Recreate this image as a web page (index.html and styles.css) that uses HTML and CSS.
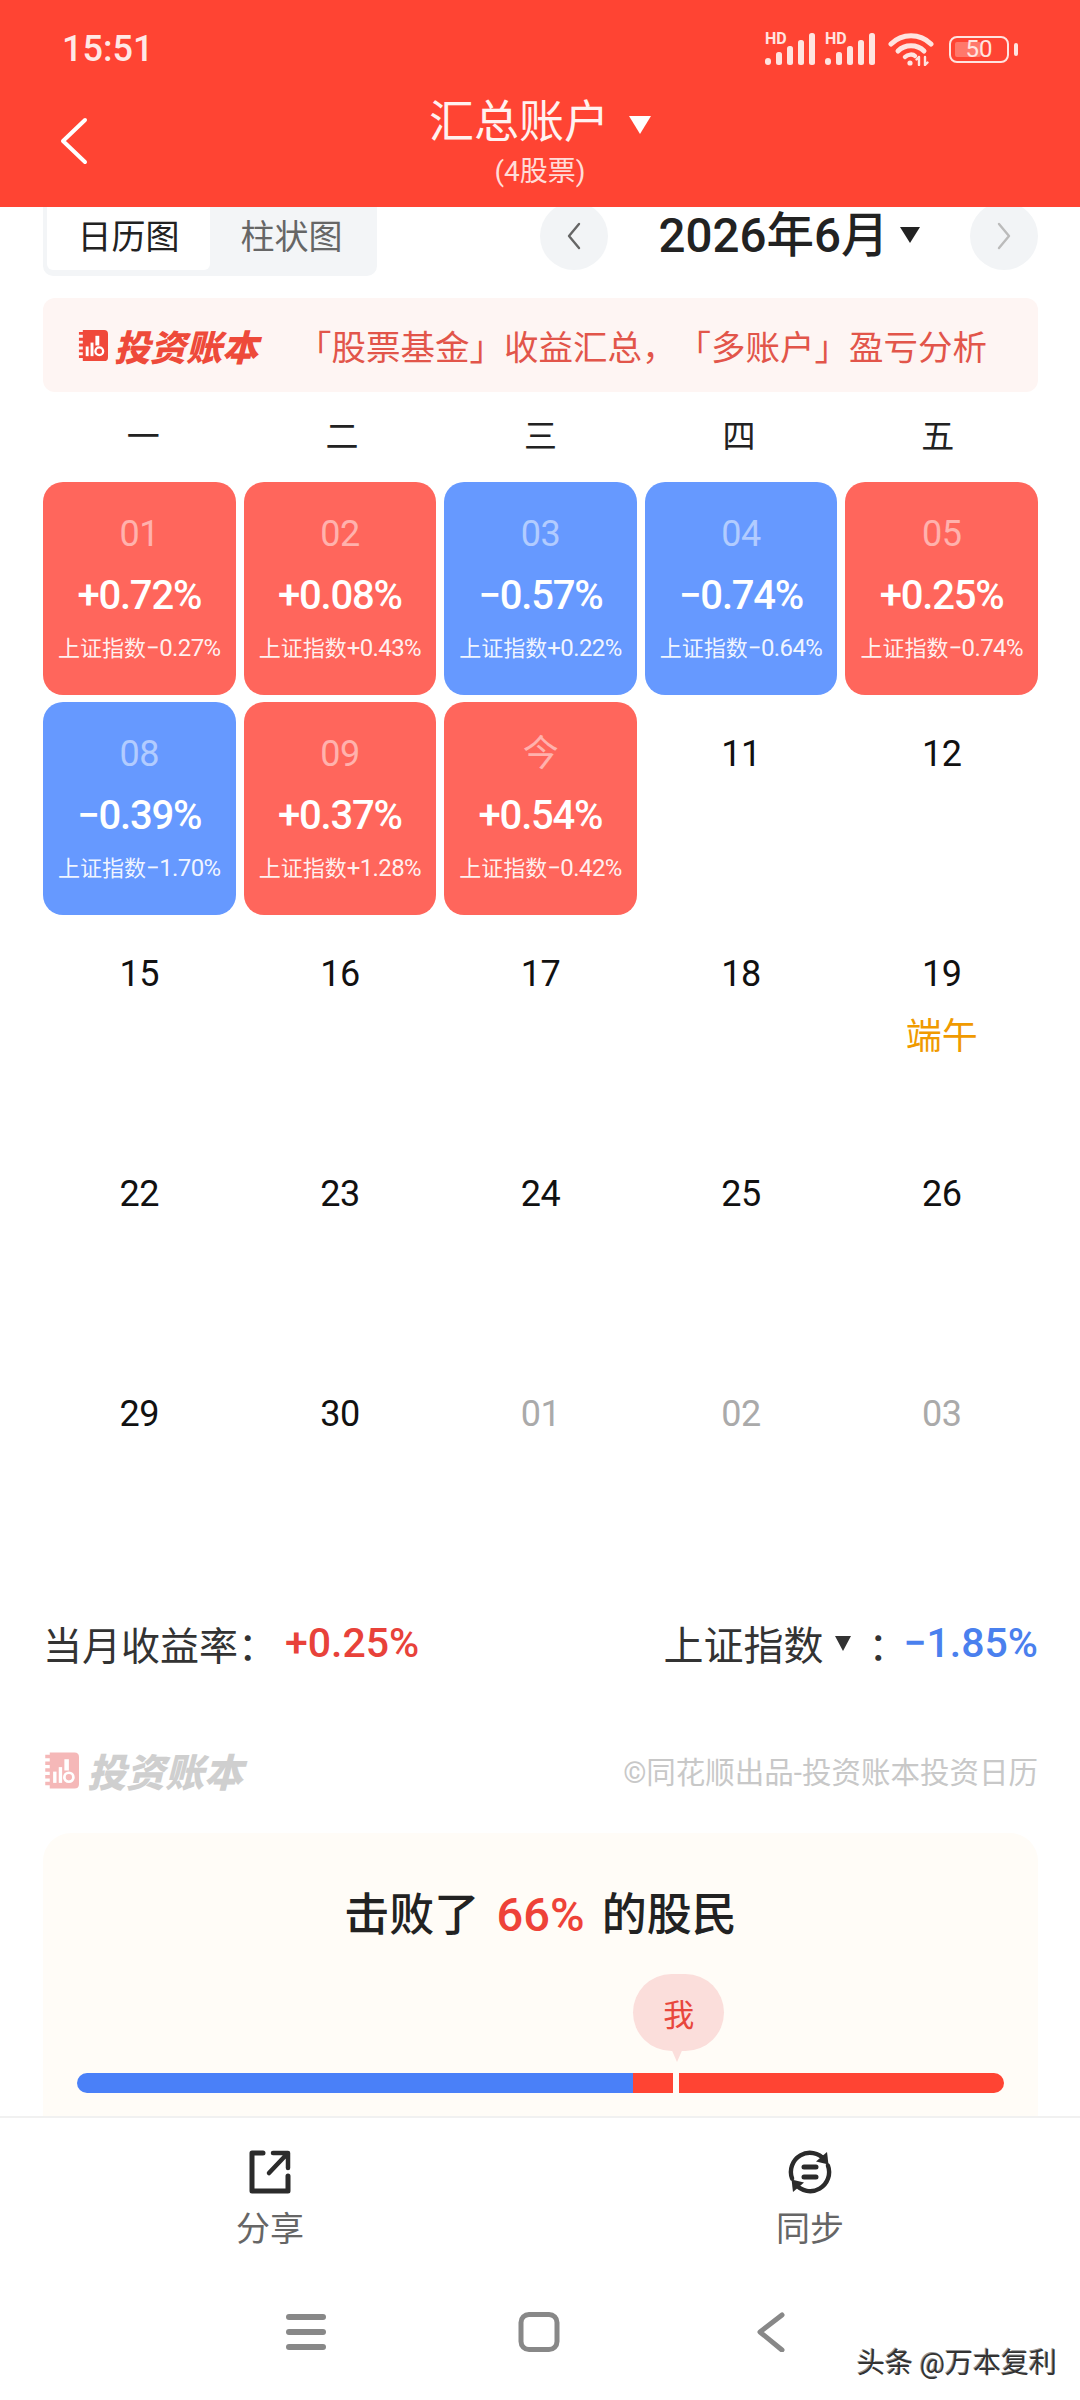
FILE: index.html

```html
<!DOCTYPE html>
<html>
<head>
<meta charset="UTF-8">
<title>投资日历</title>
<link rel="stylesheet" href="styles.css">
</head>
<body>
<svg class="defs" width="0" height="0">
  <symbol id="logo-mark" viewBox="0 0 32 32">
    <path d="M6 0H28Q32 0 32 4V28Q32 32 28 32H6V29H2V26H6V23H2V20H6V17H2V14H6V11H2V8H6V5H2V2H6Z" fill="currentColor"/>
    <rect x="9" y="17" width="3" height="10" fill="#fff"/>
    <rect x="14" y="13" width="3" height="14" fill="#fff"/>
    <rect x="19" y="6" width="4" height="10" fill="#fff"/>
    <circle cx="23" cy="22" r="4" fill="none" stroke="#fff" stroke-width="2.4"/>
  </symbol>
  <symbol id="signal" viewBox="0 0 50 32">
    <rect x="0" y="25" width="6" height="7" rx="3" fill="currentColor"/>
    <rect x="11" y="19" width="6" height="13" rx="2.5" fill="currentColor"/>
    <rect x="22" y="13" width="6" height="19" rx="2.5" fill="currentColor"/>
    <rect x="33" y="7" width="6" height="25" rx="2.5" fill="currentColor"/>
    <rect x="44" y="0" width="6" height="32" rx="2.5" fill="currentColor"/>
  </symbol>
</svg>

<div class="page">
  <header class="topbar">
    <div class="status">
      <span class="status-time">15:51</span>
      <div class="status-icons">
        <div class="signal"><span class="signal-hd">HD</span><svg class="ic-signal" viewBox="0 0 50 32"><use href="#signal"/></svg></div>
        <div class="signal"><span class="signal-hd">HD</span><svg class="ic-signal" viewBox="0 0 50 32"><use href="#signal"/></svg></div>
        <svg class="ic-wifi" viewBox="0 0 46 34" fill="none" stroke="currentColor" stroke-linecap="round">
          <path d="M3 12C14 1 32 1 43 12" stroke-width="5"/>
          <path d="M10 19C17 12 29 12 36 19" stroke-width="5"/>
          <path d="M17 25C20 22 25 22 27 24" stroke-width="4.5"/>
          <circle cx="22" cy="31" r="2.6" fill="currentColor" stroke="none"/>
          <path d="M31 33V25M28.5 27.5L31 25M37 25V33M37 33L39.5 30.5" stroke-width="2.4"/>
        </svg>
        <div class="battery"><span class="battery-fill"></span><span class="battery-num">50</span></div>
        <span class="battery-nub"></span>
      </div>
    </div>
    <div class="titlebar">
      <svg class="ic-back" viewBox="0 0 28 48" fill="none" stroke="#fff" stroke-width="4" stroke-linecap="round" stroke-linejoin="round"><path d="M25 3L3 24L25 45"/></svg>
      <div class="title-block">
        <div class="title">汇总账户<i class="tri tri-title"></i></div>
        <div class="subtitle">(4股票)</div>
      </div>
    </div>
  </header>

  <main class="content">
    <div class="toolbar">
      <div class="tabs">
        <span class="tab tab-on">日历图</span>
        <span class="tab">柱状图</span>
      </div>
      <div class="month-nav">
        <span class="round-btn"><svg viewBox="0 0 16 30" fill="none" stroke="#666" stroke-width="2.4" stroke-linecap="round" stroke-linejoin="round"><path d="M13 3L3 15L13 27"/></svg></span>
        <span class="month">2026年6月<i class="tri tri-month"></i></span>
        <span class="round-btn"><svg viewBox="0 0 16 30" fill="none" stroke="#bbb" stroke-width="2.4" stroke-linecap="round" stroke-linejoin="round"><path d="M3 3L13 15L3 27"/></svg></span>
      </div>
    </div>

    <div class="banner">
      <svg class="logo-mark"><use href="#logo-mark"/></svg>
      <span class="logo-text">投资账本</span>
      <span class="banner-text">「股票基金」收益汇总，「多账户」盈亏分析</span>
    </div>

    <div class="weekdays">
      <span>一</span><span>二</span><span>三</span><span>四</span><span>五</span>
    </div>

    <div class="calendar">
      <div class="cell up"><div class="cell-date">01</div><div class="cell-val">+0.72%</div><div class="cell-idx"><span>上证指数</span>−0.27%</div></div>
      <div class="cell up"><div class="cell-date">02</div><div class="cell-val">+0.08%</div><div class="cell-idx"><span>上证指数</span>+0.43%</div></div>
      <div class="cell down"><div class="cell-date">03</div><div class="cell-val">−0.57%</div><div class="cell-idx"><span>上证指数</span>+0.22%</div></div>
      <div class="cell down"><div class="cell-date">04</div><div class="cell-val">−0.74%</div><div class="cell-idx"><span>上证指数</span>−0.64%</div></div>
      <div class="cell up"><div class="cell-date">05</div><div class="cell-val">+0.25%</div><div class="cell-idx"><span>上证指数</span>−0.74%</div></div>

      <div class="cell down"><div class="cell-date">08</div><div class="cell-val">−0.39%</div><div class="cell-idx"><span>上证指数</span>−1.70%</div></div>
      <div class="cell up"><div class="cell-date">09</div><div class="cell-val">+0.37%</div><div class="cell-idx"><span>上证指数</span>+1.28%</div></div>
      <div class="cell up"><div class="cell-date cell-today">今</div><div class="cell-val">+0.54%</div><div class="cell-idx"><span>上证指数</span>−0.42%</div></div>
      <div class="cell"><div class="cell-date">11</div></div>
      <div class="cell"><div class="cell-date">12</div></div>

      <div class="cell"><div class="cell-date">15</div></div>
      <div class="cell"><div class="cell-date">16</div></div>
      <div class="cell"><div class="cell-date">17</div></div>
      <div class="cell"><div class="cell-date">18</div></div>
      <div class="cell"><div class="cell-date">19</div><div class="cell-note">端午</div></div>

      <div class="cell"><div class="cell-date">22</div></div>
      <div class="cell"><div class="cell-date">23</div></div>
      <div class="cell"><div class="cell-date">24</div></div>
      <div class="cell"><div class="cell-date">25</div></div>
      <div class="cell"><div class="cell-date">26</div></div>

      <div class="cell"><div class="cell-date">29</div></div>
      <div class="cell"><div class="cell-date">30</div></div>
      <div class="cell other"><div class="cell-date">01</div></div>
      <div class="cell other"><div class="cell-date">02</div></div>
      <div class="cell other"><div class="cell-date">03</div></div>
    </div>

    <div class="summary">
      <div class="summary-side">当月收益率：<b class="num-up">+0.25%</b></div>
      <div class="summary-side"><span class="summary-index">上证指数</span><i class="tri tri-index"></i><span class="summary-colon">：</span><b class="num-down">−1.85%</b></div>
    </div>

    <div class="credit">
      <div class="credit-logo">
        <svg class="logo-mark logo-mark-pale"><use href="#logo-mark"/></svg>
        <span class="logo-text logo-text-pale">投资账本</span>
      </div>
      <span class="credit-text">©同花顺出品-投资账本投资日历</span>
    </div>

    <section class="rank">
      <h2 class="rank-title">击败了 <span class="rank-pct">66%</span> 的股民</h2>
      <div class="rank-mark"><span class="bubble">我</span></div>
      <div class="rank-bar">
        <span class="seg-blue"></span>
        <span class="seg-red seg-short"></span>
        <span class="seg-red seg-long"></span>
      </div>
    </section>
  </main>

  <footer class="bottom">
    <div class="actions">
      <div class="action">
        <svg class="action-ic" viewBox="0 0 46 46" fill="none" stroke="#2b2b2b" stroke-width="5" stroke-linejoin="round" stroke-linecap="round">
          <path d="M16 4H5V42H41V27"/>
          <path d="M22 24L40 5M26 4H41V19" stroke-width="4.5"/>
        </svg>
        <span>分享</span>
      </div>
      <div class="action">
        <svg class="action-ic" viewBox="0 0 46 46" fill="none" stroke="#2b2b2b" stroke-width="4.4" stroke-linecap="round">
          <path d="M5.1 29.5A19 19 0 0 1 37.6 10.8"/>
          <path d="M40.9 16.5A19 19 0 0 1 8.4 35.2"/>
          <path d="M40 3L41.5 15.5L29 12.5Z" fill="#2b2b2b" stroke="none"/>
          <path d="M6 43L4.5 30.5L17 33.5Z" fill="#2b2b2b" stroke="none"/>
          <path d="M17 18H29M17 28H29" stroke-width="5"/>
        </svg>
        <span>同步</span>
      </div>
    </div>
    <nav class="sysnav">
      <svg class="nav-ic" viewBox="0 0 44 40" fill="#888"><rect x="2" y="2" width="40" height="6" rx="3"/><rect x="2" y="17" width="40" height="6" rx="3"/><rect x="2" y="32" width="40" height="6" rx="3"/></svg>
      <svg class="nav-ic" viewBox="0 0 44 40" fill="none" stroke="#888" stroke-width="5"><rect x="4" y="2.5" width="36" height="35" rx="8"/></svg>
      <svg class="nav-ic" viewBox="0 0 44 40" fill="none" stroke="#888" stroke-width="5" stroke-linecap="round" stroke-linejoin="round"><path d="M32 3L10 20L32 38"/></svg>
    </nav>
    <span class="watermark">头条 @万本复利</span>
  </footer>
</div>
</body>
</html>
```

FILE: styles.css

```css
* {
  box-sizing: border-box;
}
html, body {
  margin: 0;
  height: 2400px;
  overflow: hidden;
}
body {
  font-family: Roboto, "Noto Sans CJK SC", sans-serif;
  background: #fff;
  color: #222;
  text-spacing-trim: space-all;
}
.defs {
  position: absolute;
}
.page {
  width: 1080px;
  height: 2400px;
  display: flex;
  flex-direction: column;
}

/* header */
.topbar {
  height: 207px;
  flex: none;
  background: #ff4433;
  color: #fff;
}
.status {
  height: 90px;
  padding: 20px 62px 12px;
  display: flex;
  align-items: center;
  justify-content: space-between;
}
.status-time {
  font-size: 36px;
  font-weight: 500;
  color: #ffe9e6;
}
.status-icons {
  display: flex;
  align-items: center;
  color: #ffe4e0;
}
.signal {
  width: 50px;
  height: 32px;
  margin-right: 10px;
  position: relative;
}
.signal-hd {
  position: absolute;
  left: 0;
  top: -2px;
  font-size: 16px;
  font-weight: 700;
  line-height: 16px;
}
.ic-signal {
  display: block;
  width: 50px;
  height: 32px;
}
.ic-wifi {
  width: 46px;
  height: 34px;
  margin: 0 15px 0 3px;
}
.battery {
  width: 60px;
  height: 27px;
  border: 2.5px solid currentColor;
  border-radius: 8px;
  position: relative;
  display: flex;
  align-items: center;
  justify-content: center;
  font-size: 24px;
  line-height: 1;
}
.battery-fill {
  position: absolute;
  left: 4px;
  top: 4px;
  bottom: 4px;
  width: 26px;
  border-radius: 2px;
  background: rgba(255, 255, 255, 0.28);
}
.battery-num {
  position: relative;
}
.battery-nub {
  width: 4px;
  height: 13px;
  margin-left: 5px;
  border-radius: 2px;
  background: currentColor;
}
.titlebar {
  padding-top: 3px;
  position: relative;
  display: flex;
  justify-content: center;
}
.ic-back {
  position: absolute;
  left: 60px;
  top: 27px;
  width: 28px;
  height: 48px;
}
.title-block {
  text-align: center;
}
.title {
  font-size: 45px;
  line-height: 60px;
  color: #fff2f0;
}
.subtitle {
  font-size: 28px;
  line-height: 34px;
  margin-top: 2px;
  color: #ffdcd8;
}
.tri {
  display: inline-block;
  width: 0;
  height: 0;
  border-style: solid;
  border-color: currentColor transparent transparent;
}
.tri-title {
  border-width: 18px 11px 0;
  margin-left: 20px;
  vertical-align: 4px;
  color: #fff;
}

/* main column */
.content {
  flex: 1;
  min-height: 0;
  overflow: hidden;
  padding: 0 42px 0 43px;
}
.toolbar {
  height: 74px;
  margin-top: -5px;
  display: flex;
  justify-content: space-between;
}
.tabs {
  width: 334px;
  padding: 0 4px 6px;
  display: flex;
  background: #f3f5f7;
  border-radius: 0 0 10px 10px;
}
.tab {
  width: 163px;
  font-size: 34px;
  padding-top: 8px;
  text-align: center;
  color: #666;
}
.tab-on {
  color: #222;
  background: #fff;
  border-radius: 0 0 6px 6px;
}
.month-nav {
  width: 498px;
  height: 68px;
  display: flex;
  align-items: center;
  justify-content: space-between;
}
.round-btn {
  width: 68px;
  height: 68px;
  border-radius: 50%;
  background: #f2f4f6;
  display: flex;
  align-items: center;
  justify-content: center;
}
.round-btn svg {
  width: 16px;
  height: 30px;
}
.month {
  font-size: 47.5px;
  font-weight: 500;
  line-height: 68px;
  color: #222;
}
.tri-month {
  border-width: 16px 10.5px 0;
  margin-left: 11px;
  vertical-align: 9px;
}

.banner {
  height: 94px;
  margin-top: 22px;
  padding-left: 34px;
  display: flex;
  align-items: center;
  background: #fef5f3;
  border-radius: 12px;
}
.logo-mark {
  width: 31px;
  height: 31px;
  color: #f0493a;
}
.logo-text {
  margin-left: 6px;
  font-size: 36px;
  font-weight: 900;
  font-style: italic;
  color: #ee4a3a;
  font-family: "Noto Sans CJK SC", sans-serif;
}
.banner-text {
  margin-left: 39px;
  font-size: 34.5px;
  color: #e2554a;
  white-space: nowrap;
}

.weekdays {
  margin-top: 20px;
  padding: 0 5px;
  display: grid;
  grid-template-columns: repeat(5, 1fr);
  column-gap: 8px;
  font-size: 33px;
  line-height: 50px;
  text-align: center;
}

.calendar {
  margin-top: 20px;
  display: grid;
  grid-template-columns: repeat(5, 1fr);
  grid-auto-rows: 213px;
  gap: 7px 8px;
}
.cell {
  padding-top: 30px;
  border-radius: 20px;
  text-align: center;
}
.cell.up {
  background: #ff665c;
  color: #fff;
}
.cell.down {
  background: #6699ff;
  color: #fff;
}
.cell-date {
  font-size: 36px;
  line-height: 44px;
  letter-spacing: -0.5px;
  color: #111;
}
.up .cell-date, .down .cell-date {
  color: rgba(255, 255, 255, 0.5);
}
.other .cell-date {
  color: #aaa;
}
.cell-val {
  margin-top: 15px;
  font-size: 40px;
  font-weight: 500;
  line-height: 50px;
  letter-spacing: -1.2px;
}
.cell-idx {
  margin-top: 12px;
  font-size: 24px;
  line-height: 30px;
  color: rgba(255, 255, 255, 0.92);
  white-space: nowrap;
  letter-spacing: -0.6px;
}
.cell-idx span {
  font-size: 22px;
  letter-spacing: 0;
}
.cell-note {
  margin-top: 16px;
  font-size: 36px;
  line-height: 50px;
  color: #f09a00;
}

.summary {
  margin-top: 40px;
  height: 56px;
  display: flex;
  justify-content: space-between;
  align-items: center;
  font-size: 39px;
  color: #333;
}
.summary-side {
  display: flex;
  align-items: center;
}
.summary-side b {
  font-size: 41px;
  font-weight: 500;
}
.summary-index {
  font-size: 40px;
}
.summary-colon {
  margin-right: -4px;
}
.num-up {
  margin-left: 8px;
  color: #e8423a;
}
.num-down {
  color: #4a80ee;
}
.tri-index {
  border-width: 15px 8.5px 0;
  margin: 0 17px 0 12px;
  color: #333;
}

.credit {
  margin-top: 79px;
  height: 40px;
  display: flex;
  align-items: center;
  justify-content: space-between;
}
.credit-logo {
  display: flex;
  align-items: center;
}
.logo-mark-pale {
  width: 36px;
  height: 37px;
  color: #f5b8b8;
}
.logo-text-pale {
  margin-left: 8px;
  font-size: 39px;
  color: #cfcfcf;
}
.credit-text {
  font-size: 29.5px;
  color: #c8c8c8;
  white-space: nowrap;
}

.rank {
  margin-top: 43px;
  height: 330px;
  padding: 52px 34px 0;
  background: #fffcf7;
  border-radius: 28px;
}
.rank-title {
  margin: 0;
  font-size: 45px;
  font-weight: 500;
  line-height: 60px;
  text-align: center;
  word-spacing: 6px;
  color: #222;
}
.rank-pct {
  font-size: 47px;
  color: #ee4238;
}
.rank-mark {
  margin-top: 28px;
  height: 99px;
  padding-left: 60%;
}
.bubble {
  width: 91px;
  height: 77px;
  border-radius: 40px;
  background: #fbdedb;
  color: #e8473c;
  font-size: 31px;
  display: flex;
  align-items: center;
  justify-content: center;
  position: relative;
}
.bubble::after {
  content: "";
  position: absolute;
  left: 37px;
  top: 72px;
  border-style: solid;
  border-width: 16px 7px 0;
  border-color: #fbdedb transparent transparent;
}
.rank-bar {
  height: 20px;
  display: flex;
}
.rank-bar span {
  display: block;
}
.seg-blue {
  width: 60%;
  background: #4a80f8;
  border-radius: 10px 0 0 10px;
}
.seg-red {
  background: #ff4433;
}
.seg-short {
  width: 40px;
}
.seg-long {
  flex: 1;
  margin-left: 6px;
  border-radius: 0 10px 10px 0;
}

/* bottom */
.bottom {
  height: 284px;
  flex: none;
  background: #fff;
  border-top: 2px solid #f1f1f1;
  position: relative;
}
.actions {
  height: 152px;
  padding-top: 31px;
  display: grid;
  grid-template-columns: 1fr 1fr;
}
.action {
  display: flex;
  flex-direction: column;
  align-items: center;
  font-size: 34px;
  line-height: 44px;
  color: #666;
}
.action-ic {
  width: 46px;
  height: 46px;
  margin-bottom: 12px;
}
.sysnav {
  padding: 42px 2px 0 0;
  display: flex;
  justify-content: center;
  gap: 189px;
}
.nav-ic {
  width: 44px;
  height: 40px;
}
.watermark {
  position: absolute;
  right: 23px;
  top: 228px;
  font-size: 28px;
  line-height: 36px;
  color: #333;
  text-shadow: 1px 1px 0 #fff, -1px -1px 0 #999;
  white-space: nowrap;
}
```
